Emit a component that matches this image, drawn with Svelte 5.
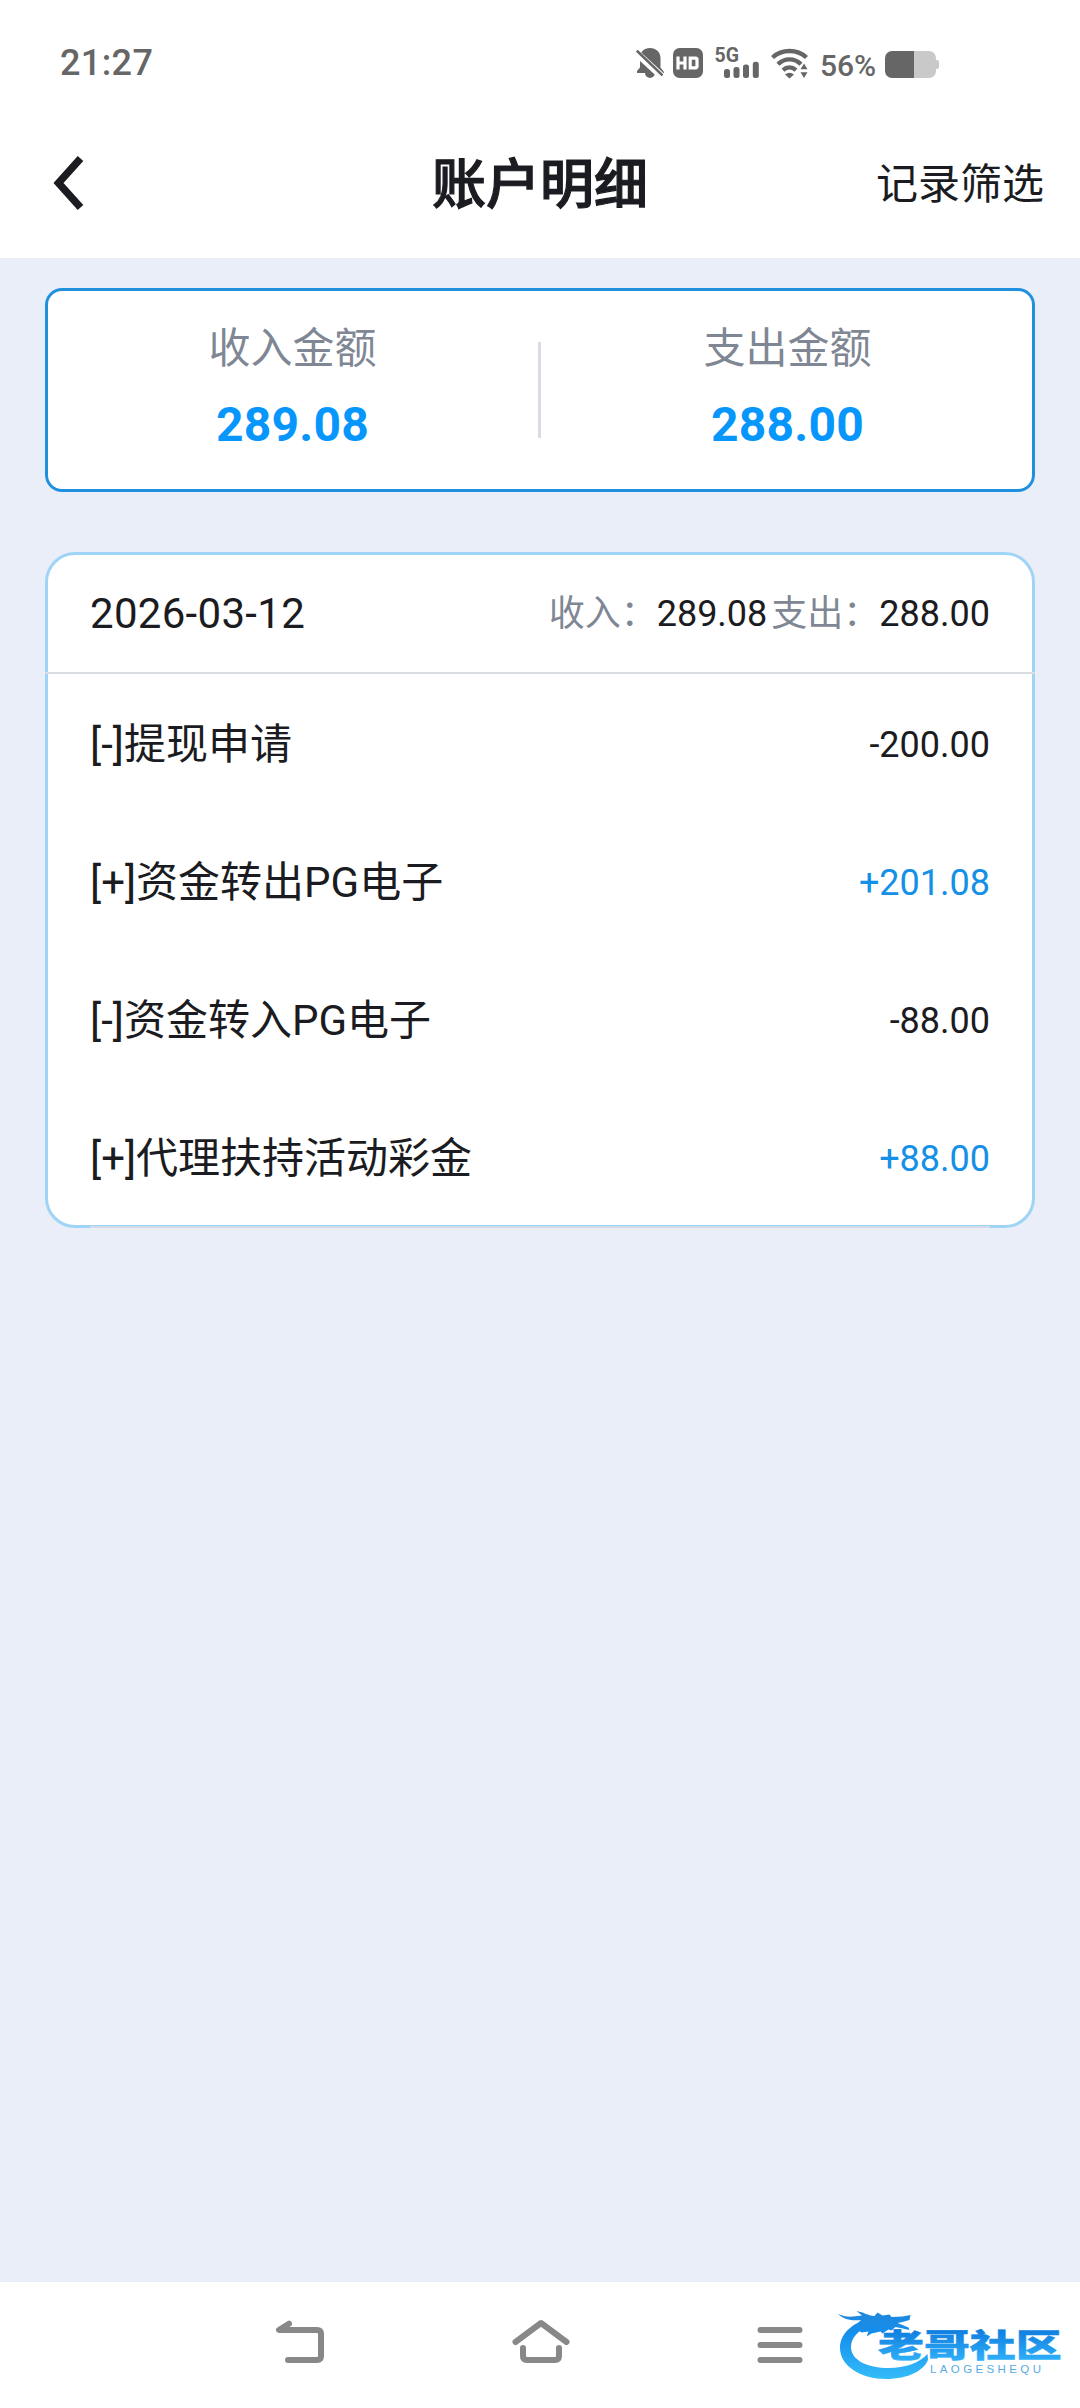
<script lang="ts">
	type RecordRow = { title: string; amount: string };

	const summary = [
		{ label: '收入金额', value: '289.08' },
		{ label: '支出金额', value: '288.00' }
	];

	const records: RecordRow[] = [
		{ title: '[-]提现申请', amount: '-200.00' },
		{ title: '[+]资金转出PG电子', amount: '+201.08' },
		{ title: '[-]资金转入PG电子', amount: '-88.00' },
		{ title: '[+]代理扶持活动彩金', amount: '+88.00' }
	];
</script>

<div class="screen">
	<div class="status-bar">
		<span class="time">21:27</span>
		<div class="status-icons">
			<svg class="bell" width="28" height="32" viewBox="0 0 28 32">
				<path
					d="M14 1c6 0 10.500 4.200 10.500 10v9.500L28 25v1H19a5 5 0 0 1-10 0H1v-2l3-3.500V11C4 5 8 1 14 1z"
					fill="#666"
				/>
				<path d="M-1 4.500 26 29.500" stroke="#fff" stroke-width="7" />
				<path d="M.8 3.600 26.500 28.400" stroke="#666" stroke-width="2.600" />
			</svg>
			<svg class="hd" width="30" height="30" viewBox="0 0 30 30">
				<rect width="30" height="30" rx="6.500" fill="#666" />
				<path
					d="M5 8.500v13M12 8.500v13M5 15h7M17.200 10.200h5.300q1.500 0 1.500 1.500v6.600q0 1.500-1.500 1.500h-5.300z"
					fill="none"
					stroke="#fff"
					stroke-width="3.200"
				/>
			</svg>
			<svg class="signal" width="48" height="44" viewBox="-3 -12 48 44">
				<text x="-0.500" y="15" class="net">5G</text>
				<g fill="#666">
					<rect x="9" y="22" width="6" height="9" rx="2.500" />
					<rect x="18.500" y="20" width="6" height="11" rx="2.500" />
					<rect x="28" y="17.500" width="6" height="13.500" rx="2.500" />
					<rect x="37.800" y="14.800" width="6" height="16.200" rx="2.500" />
				</g>
			</svg>
			<svg class="wifi" width="38" height="32" viewBox="0 0 38 32">
				<g fill="none" stroke="#666" stroke-width="4.400">
					<path d="M1.500 10.500C11 1.800 26 1.800 35.500 10.500" />
					<path d="M7 17.200c6.500-6.500 16.500-6.500 23 0" />
					<path d="M12 23.200c4-3.600 9-3.600 13 0" />
				</g>
				<path d="M14 27.500q4.500-3.600 9 0l-4.500 4z" fill="#666" />
				<path
					d="M29.500 22.300 33 16.500l3.500 5.800zM29.500 25.300h7L33 31z"
					fill="#666"
					stroke="#fff"
					stroke-width="1.500"
					paint-order="stroke"
				/>
			</svg>
			<span class="percent">56%</span>
			<svg class="battery" width="54" height="27" viewBox="0 0 54 27">
				<path d="M28 0h16a7 7 0 0 1 7 7v2h1q2 0 2 2v5q0 2-2 2h-1v2a7 7 0 0 1-7 7H28z" fill="#c9c9c9" />
				<path d="M7 0h22v27H7a7 7 0 0 1-7-7V7a7 7 0 0 1 7-7z" fill="#666" />
			</svg>
		</div>
	</div>

	<header class="title-bar">
		<button class="back" aria-label="返回">
			<svg width="34" height="58" viewBox="0 0 34 58">
				<path d="M29.500 4.500 7.500 29 29.500 53.500" fill="none" stroke="#1b1c22" stroke-width="7.500" />
			</svg>
		</button>
		<h1>账户明细</h1>
		<button class="filter">记录筛选</button>
	</header>

	<main>
		<section class="summary">
			{#each summary as item, i}
				{#if i > 0}
					<div class="divider"></div>
				{/if}
				<div class="summary-item">
					<span class="summary-label">{item.label}</span>
					<strong>{item.value}</strong>
				</div>
			{/each}
		</section>

		<section class="records">
			<div class="records-head">
				<span class="date">2026-03-12</span>
				<div class="totals">
					<span><em>收入：</em>289.08</span>
					<span><em>支出：</em>288.00</span>
				</div>
			</div>
			{#each records as record}
				<div class="record">
					<span class="record-title">{record.title}</span>
					<span class="amount" class:income={record.amount.startsWith('+')}>{record.amount}</span>
				</div>
			{/each}
		</section>
	</main>

	<nav>
		<svg width="48" height="44" viewBox="0 0 48 44">
			<path d="M13 4.700 3 11h38q4 0 4 4v22q0 4-4 4H12" />
		</svg>
		<svg width="58" height="44" viewBox="0 0 58 44">
			<path d="M3.500 23 29 4l25.500 19M11 29v8q0 4 4 4h28q4 0 4-4v-8" />
		</svg>
		<svg width="46" height="44" viewBox="0 0 46 44">
			<path d="M3.500 11h39M3.500 26h39M3.500 41h39" />
		</svg>
	</nav>

	<div class="watermark">
		<svg width="228" height="84" viewBox="0 0 228 84">
			<defs>
				<linearGradient id="wave" x1="0" y1="10" x2="0" y2="78" gradientUnits="userSpaceOnUse">
					<stop offset="0" stop-color="#2088dc" />
					<stop offset="0.300" stop-color="#148eec" />
					<stop offset="1" stop-color="#35bdfa" />
				</linearGradient>
				<linearGradient id="mark" x1="0" y1="-26" x2="0" y2="4" gradientUnits="userSpaceOnUse">
					<stop offset="0" stop-color="#117fe0" />
					<stop offset="1" stop-color="#2fb0f8" />
				</linearGradient>
			</defs>
			<g fill="url(#wave)">
				<!-- tail curling round the name -->
				<path
					d="M31 17C13 22 3 33 3 46c0 18 21 31 46 31 23 0 38-9 42-19l-.5-6C82 61 68 66 52 66c-22 0-38-8-38-21 0-9 7-17 19-21z"
				/>
				<!-- head, horns and beard -->
				<path
					d="M1 12c5 2 9 3 15 2.500l9-1-5.500-4.500c8 1.500 11 4.500 18 5l3-3.500 5 3 7-1 2 2.500 11-.5 8-1.500-1 5-7 2-5 1 11 4.500 1 2.500-9-2-5-1-4 3.500-3-1-6 4-2-2-9 2-5 3 2-5-7 1-3-2-5 1C18 23 22 20 24 18c-8 1-17 0-23-6z"
				/>
			</g>
			<text class="mark" transform="translate(41 55) scale(1.435 1)">老哥社区</text>
			<text class="mark-sub" x="93" y="70.500" textLength="111">LAOGESHEQU</text>
		</svg>
	</div>
</div>

<style>
	:global(body) {
		margin: 0;
		background: #e9eef9;
	}

	.screen {
		position: relative;
		display: flex;
		flex-direction: column;
		width: 1080px;
		height: 2408px;
		overflow: hidden;
		color: #1b1c21;
		background: #e9eef9;
		font-family: Roboto, 'Noto Sans CJK SC', sans-serif;
	}

	button {
		padding: 0;
		border: 0;
		background: none;
		color: inherit;
		font-family: inherit;
	}

	svg {
		display: block;
	}

	.status-bar {
		display: flex;
		justify-content: space-between;
		height: 108px;
		padding: 0 141px 0 60px;
		background: #fff;
		color: #666;
		font-weight: 500;
	}

	.time {
		margin-top: 42px;
		font-size: 36px;
		line-height: 42px;
		letter-spacing: 0.4px;
	}

	.status-icons {
		display: flex;
		align-items: flex-start;
		padding-top: 47px;
	}

	.hd {
		margin: 1px 12px 0 9px;
	}

	.signal {
		margin: -12px 0 0 -3px;
	}

	.net {
		fill: #666;
		font-size: 19.500px;
		font-weight: 700;
	}

	.wifi {
		margin-left: 11px;
	}

	.percent {
		width: 55px;
		margin: 1px 10px 0 11px;
		font-size: 30px;
		line-height: 36px;
		white-space: nowrap;
	}

	.battery {
		margin-top: 4px;
	}

	.title-bar {
		display: grid;
		grid-template-columns: 1fr auto 1fr;
		align-items: center;
		height: 150px;
		padding: 0 36px 0 51px;
		background: #fff;
	}

	.back {
		justify-self: start;
	}

	h1 {
		margin: 5px 15px 0 0;
		font-size: 54px;
		font-weight: 500;
		line-height: 80px;
		-webkit-text-stroke: 1.2px #1b1c21;
	}

	.filter {
		justify-self: end;
		margin-top: 3px;
		font-size: 42px;
		line-height: 60px;
	}

	main {
		flex: 1;
		padding: 30px 45px;
	}

	.summary {
		display: flex;
		align-items: center;
		height: 204px;
		border-radius: 17px;
		background: #fff;
		box-shadow: inset 0 0 0 3px #1e90de;
	}

	.summary-item {
		flex: 1;
		display: flex;
		flex-direction: column;
		align-items: center;
		gap: 14px;
		margin-bottom: 6px;
	}

	.summary-label {
		color: #7f8795;
		font-size: 42px;
		line-height: 62px;
	}

	.summary strong {
		color: #0796fb;
		font-size: 48px;
		font-weight: 700;
		line-height: 62px;
		letter-spacing: 0.2px;
	}

	.divider {
		width: 3px;
		height: 96px;
		margin: 0 -1px 0 -2px;
		background: #d9dce2;
	}

	.records {
		height: 670px;
		margin-top: 60px;
		border: 3px solid #a0d4f6;
		border-radius: 30px;
		background: #fff;
	}

	.records-head {
		display: flex;
		align-items: center;
		justify-content: space-between;
		height: 117px;
		margin: 0 -3px;
		padding: 0 45px;
		border-bottom: 2px solid #d9dde2;
	}

	.date {
		font-size: 42px;
		letter-spacing: 0.3px;
	}

	.totals {
		display: flex;
		gap: 4px;
		margin-bottom: 7px;
		font-size: 36px;
	}

	.totals em {
		color: #7f8795;
		font-style: normal;
	}

	.record {
		display: flex;
		align-items: center;
		justify-content: space-between;
		height: 138px;
		margin: 0 42px;
		font-size: 42px;
	}

	.record:last-child {
		border-bottom: 2px solid #d5dce9;
	}

	.record-title {
		margin-bottom: 5px;
	}

	.amount {
		margin-top: 3px;
		font-size: 36px;
	}

	.income {
		color: #1490e6;
	}

	nav {
		display: flex;
		align-items: flex-start;
		justify-content: space-between;
		height: 89px;
		padding: 37px 277px 0 276px;
		background: #fff;
	}

	nav path {
		fill: none;
		stroke: #888;
		stroke-width: 6;
		stroke-linecap: round;
		stroke-linejoin: round;
	}

	.watermark {
		position: absolute;
		right: 15px;
		bottom: 22px;
	}

	.mark {
		fill: url(#mark);
		stroke: url(#mark);
		font-family: 'Noto Sans CJK SC', sans-serif;
		font-size: 32px;
		font-weight: 900;
		stroke-width: 0.5;
	}

	.mark-sub {
		fill: #5aabe4;
		font-family: 'Liberation Sans', sans-serif;
		font-size: 11.500px;
	}
</style>
